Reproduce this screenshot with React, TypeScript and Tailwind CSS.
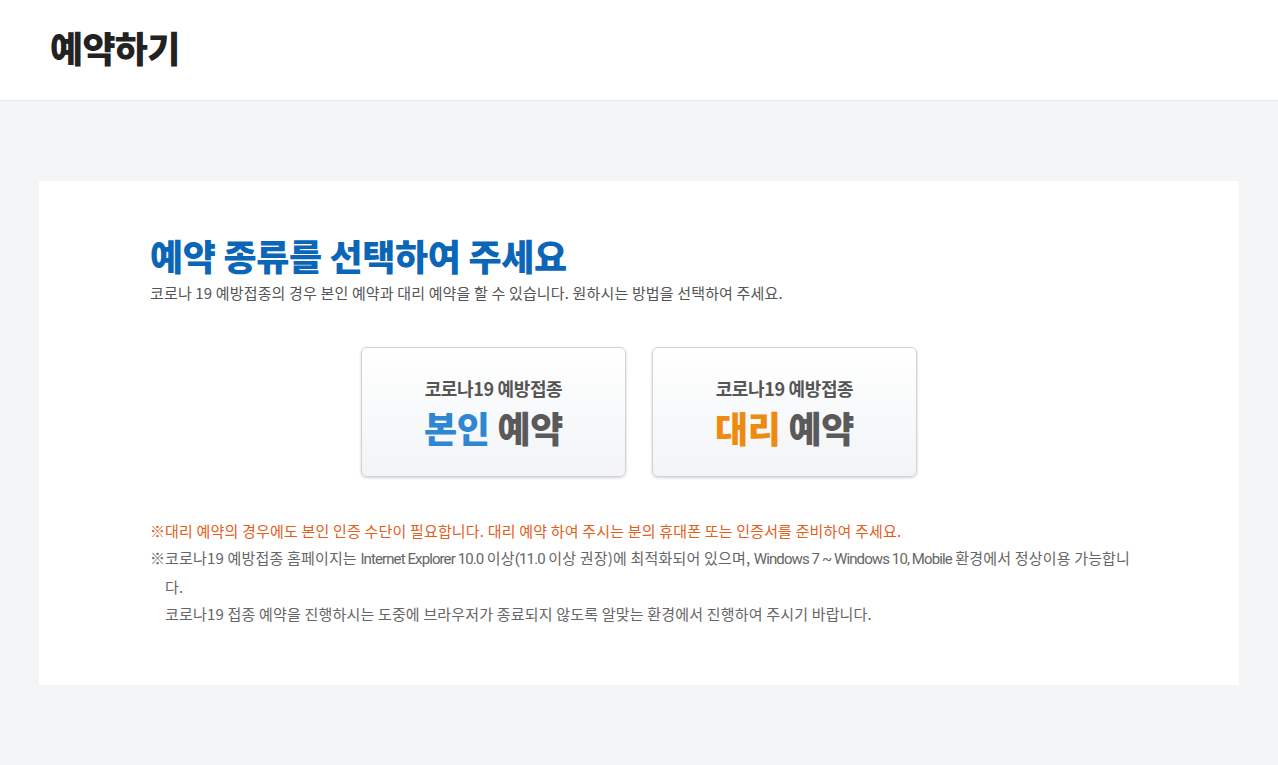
import React from 'react';

const font = { fontFamily: '"Noto Sans CJK KR", "Noto Sans", sans-serif' };

const TypeButton: React.FC<{ accent: string; colorClass: string }> = ({ accent, colorClass }) => (
  <button className="w-[265px] h-[130px] rounded-md border border-[#d3d3d3] bg-gradient-to-b from-white to-[#f2f4f6] shadow-[0_1px_3px_rgba(0,0,0,0.18)] flex flex-col items-center justify-center">
    <span className="text-[18px] font-bold text-[#555] tracking-[-0.02em] leading-none">코로나19 예방접종</span>
    <span className="mt-[12px] text-[36px] font-black tracking-[-0.01em] leading-none text-[#5a5a5a]">
      <span className={colorClass}>{accent}</span> 예약
    </span>
  </button>
);

const Latin: React.FC<{ children: React.ReactNode }> = ({ children }) => (
  <span className="tracking-[-0.06em]" style={{ fontFamily: 'Roboto, "Noto Sans CJK KR", sans-serif' }}>
    {children}
  </span>
);

const App: React.FC = () => {
  return (
    <div className="min-h-[765px] bg-[#f4f5f7]" style={font}>
      <header className="h-[101px] bg-white border-b border-[#e8e9ec] flex items-center px-[50px]">
        <h1 className="text-[36px] font-black text-[#222] tracking-[-0.02em] leading-none -mt-[6px]">예약하기</h1>
      </header>

      <main className="px-[39px] pt-[80px] pb-[80px]">
        <div className="bg-white h-[504px] pl-[111px] pt-[56px]">
          <h2 className="text-[36px] font-black text-[#0b66b8] tracking-[-0.01em] leading-none">예약 종류를 선택하여 주세요</h2>
          <p className="mt-[12px] text-[15px] text-[#555] tracking-[0.01em] leading-none">
            코로나 19 예방접종의 경우 본인 예약과 대리 예약을 할 수 있습니다. 원하시는 방법을 선택하여 주세요.
          </p>

          <div className="flex justify-center gap-[26px] mt-[47px] -ml-[111px]">
            <TypeButton accent="본인" colorClass="text-[#2f86d1]" />
            <TypeButton accent="대리" colorClass="text-[#ef8a10]" />
          </div>

          <ul className="mt-[40px] text-[15px] tracking-[0.012em] leading-[27px]">
            <li className="text-[#e2601c] flex">
              <span className="w-[15px] shrink-0">※</span>
              <span>대리 예약의 경우에도 본인 인증 수단이 필요합니다. 대리 예약 하여 주시는 분의 휴대폰 또는 인증서를 준비하여 주세요.</span>
            </li>
            <li className="text-[#666] flex">
              <span className="w-[15px] shrink-0">※</span>
              <span className="whitespace-nowrap">
                코로나19 예방접종 홈페이지는 <Latin>Internet Explorer 10.0</Latin> 이상<Latin>(11.0</Latin> 이상 권장)에 최적화되어 있으며,{' '}
                <Latin>Windows 7 ~ Windows 10, Mobile</Latin> 환경에서 정상이용 가능합니
                <br />
                다.
                <br />
                코로나19 접종 예약을 진행하시는 도중에 브라우저가 종료되지 않도록 알맞는 환경에서 진행하여 주시기 바랍니다.
              </span>
            </li>
          </ul>
        </div>
      </main>
    </div>
  );
};

export default App;
